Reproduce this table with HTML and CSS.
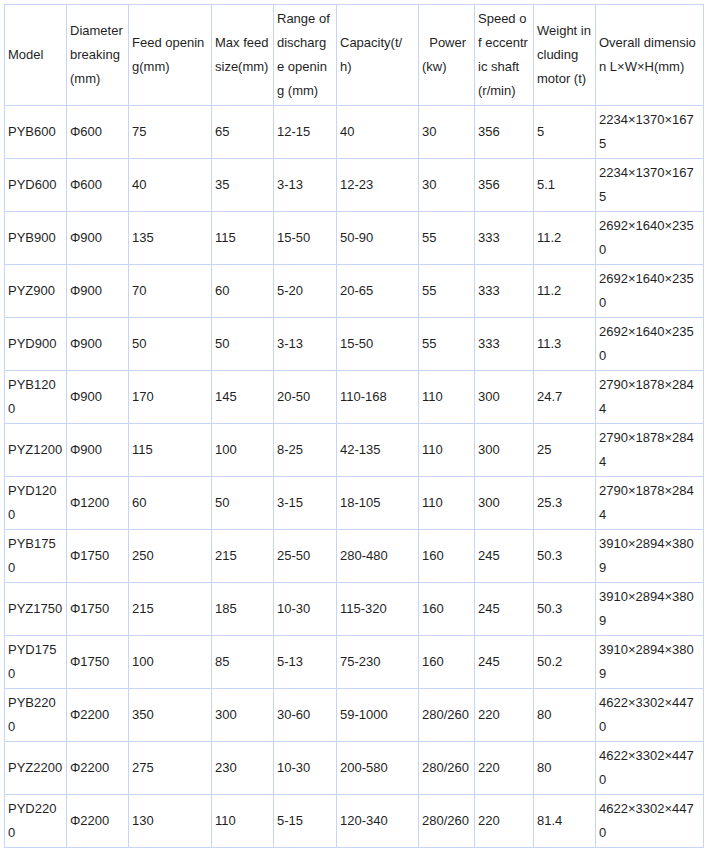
FILE: index.html
```html
<!DOCTYPE html>
<html>
<head>
<meta charset="utf-8">
<link rel="stylesheet" href="styles.css">
</head>
<body>
<table class="spec">
<colgroup>
<col class="c1"><col class="c2"><col class="c3"><col class="c4"><col class="c5"><col class="c6"><col class="c7"><col class="c8"><col class="c9"><col class="c10">
</colgroup>
<thead>
<tr><th>Model</th><th>Diameter breaking (mm)</th><th>Feed opening(mm)</th><th>Max feed size(mm)</th><th>Range of discharge opening (mm)</th><th>Capacity(t/<br>h)</th><th>&nbsp;&nbsp;Power (kw)</th><th>Speed of eccentric shaft (r/min)</th><th>Weight including motor (t)</th><th>Overall dimension L×W×H(mm)</th></tr>
</thead>
<tbody>
<tr><td>PYB600</td><td>Φ600</td><td>75</td><td>65</td><td>12-15</td><td>40</td><td>30</td><td>356</td><td>5</td><td>2234×1370×1675</td></tr>
<tr><td>PYD600</td><td>Φ600</td><td>40</td><td>35</td><td>3-13</td><td>12-23</td><td>30</td><td>356</td><td>5.1</td><td>2234×1370×1675</td></tr>
<tr><td>PYB900</td><td>Φ900</td><td>135</td><td>115</td><td>15-50</td><td>50-90</td><td>55</td><td>333</td><td>11.2</td><td>2692×1640×2350</td></tr>
<tr><td>PYZ900</td><td>Φ900</td><td>70</td><td>60</td><td>5-20</td><td>20-65</td><td>55</td><td>333</td><td>11.2</td><td>2692×1640×2350</td></tr>
<tr><td>PYD900</td><td>Φ900</td><td>50</td><td>50</td><td>3-13</td><td>15-50</td><td>55</td><td>333</td><td>11.3</td><td>2692×1640×2350</td></tr>
<tr><td>PYB1200</td><td>Φ900</td><td>170</td><td>145</td><td>20-50</td><td>110-168</td><td>110</td><td>300</td><td>24.7</td><td>2790×1878×2844</td></tr>
<tr><td>PYZ1200</td><td>Φ900</td><td>115</td><td>100</td><td>8-25</td><td>42-135</td><td>110</td><td>300</td><td>25</td><td>2790×1878×2844</td></tr>
<tr><td>PYD1200</td><td>Φ1200</td><td>60</td><td>50</td><td>3-15</td><td>18-105</td><td>110</td><td>300</td><td>25.3</td><td>2790×1878×2844</td></tr>
<tr><td>PYB1750</td><td>Φ1750</td><td>250</td><td>215</td><td>25-50</td><td>280-480</td><td>160</td><td>245</td><td>50.3</td><td>3910×2894×3809</td></tr>
<tr><td>PYZ1750</td><td>Φ1750</td><td>215</td><td>185</td><td>10-30</td><td>115-320</td><td>160</td><td>245</td><td>50.3</td><td>3910×2894×3809</td></tr>
<tr><td>PYD1750</td><td>Φ1750</td><td>100</td><td>85</td><td>5-13</td><td>75-230</td><td>160</td><td>245</td><td>50.2</td><td>3910×2894×3809</td></tr>
<tr><td>PYB2200</td><td>Φ2200</td><td>350</td><td>300</td><td>30-60</td><td>59-1000</td><td>280/260</td><td>220</td><td>80</td><td>4622×3302×4470</td></tr>
<tr><td>PYZ2200</td><td>Φ2200</td><td>275</td><td>230</td><td>10-30</td><td>200-580</td><td>280/260</td><td>220</td><td>80</td><td>4622×3302×4470</td></tr>
<tr><td>PYD2200</td><td>Φ2200</td><td>130</td><td>110</td><td>5-15</td><td>120-340</td><td>280/260</td><td>220</td><td>81.4</td><td>4622×3302×4470</td></tr>
</tbody>
</table>
</body>
</html>
```

FILE: styles.css
```css
html, body {
  margin: 0;
  padding: 0;
  background: #ffffff;
}
body {
  padding: 4px;
  font-family: "Liberation Sans", Arial, sans-serif;
  font-size: 13px;
  line-height: 24px;
  color: #1f1f1f;
}
.spec {
  table-layout: fixed;
  width: 700px;
  border-collapse: collapse;
}
.spec th,
.spec td {
  border: 1px solid #c6d4f7;
  padding: 2px 3px 2px 3px;
  text-align: left;
  vertical-align: middle;
  font-weight: normal;
  word-break: break-all;
}
.spec th:first-child,
.spec td:first-child {
  padding-right: 3.6px;
}
.c1 { width: 62px; }
.c2 { width: 62px; }
.c3 { width: 83px; }
.c4 { width: 62px; }
.c5 { width: 63px; }
.c6 { width: 82px; }
.c7 { width: 56px; }
.c8 { width: 59px; }
.c9 { width: 62px; }
.c10 { width: 108px; }
```
